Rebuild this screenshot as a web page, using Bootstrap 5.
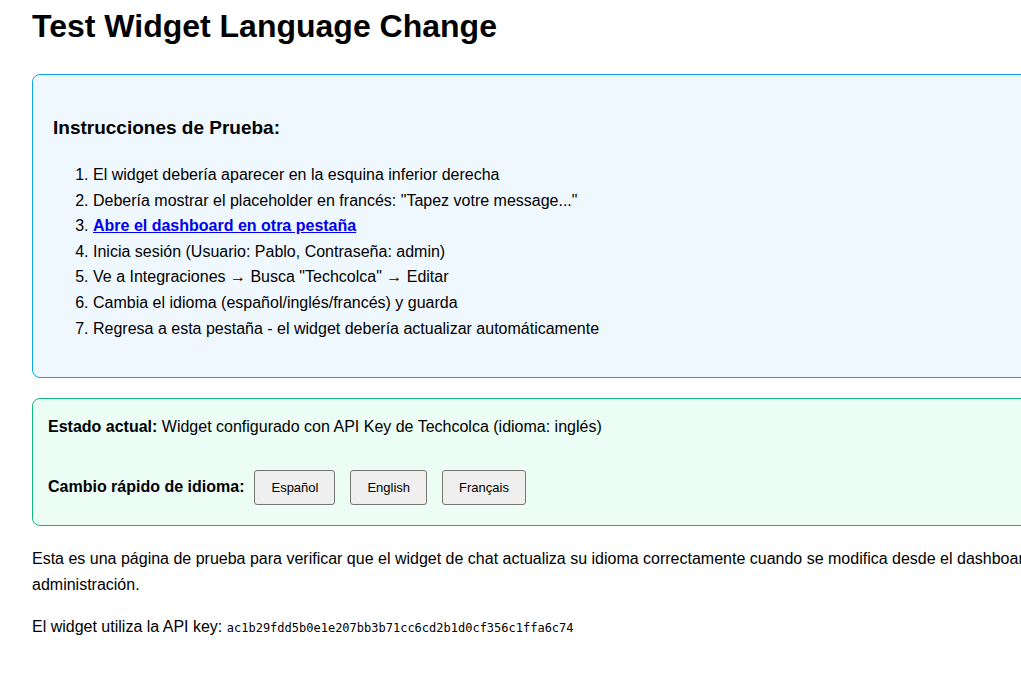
<!DOCTYPE html>
<html lang="es">
<head>
<meta charset="utf-8">
<meta name="viewport" content="width=device-width, initial-scale=1">
<title>Test Widget Language Change</title>
<link href="https://cdn.jsdelivr.net/npm/bootstrap@5.3.0/dist/css/bootstrap.min.css" rel="stylesheet">
<style>
  body { font-family: "Liberation Sans", Arial, sans-serif; font-size: 16px; line-height: 1.6; color: #000; background: #fff; overflow-x: hidden; }
  .page { min-width: 1100px; padding: 0 32px; }
  .page-title { font-size: 32px; font-weight: 700; line-height: 52px; margin: 0 0 22px; }
  .panel { border: 1px solid; border-radius: 8px; margin-bottom: 20px; }
  .panel-info { background: #f0f8ff; border-color: #0ea5e9; padding: 20px; }
  .panel-state { background: #ecfdf5; border-color: #10b981; padding: 15px; }
  .panel-title { font-size: 19px; font-weight: 700; line-height: 30px; margin: 18px 0 19px; }
  .steps { padding-left: 40px; margin-bottom: 16px; }
  .steps a { color: #00e; }
  .lang-row { gap: 10px; margin: 30px 0 5px; }
  .lang-list { gap: 15px; }
  .btn-lang { --bs-btn-font-size: 13px; --bs-btn-line-height: 17px; --bs-btn-padding-x: 16px; --bs-btn-padding-y: 8px; --bs-btn-border-radius: 3px; --bs-btn-color: #000; --bs-btn-bg: #efefef; --bs-btn-border-color: #767676; --bs-btn-hover-bg: #e5e5e5; --bs-btn-hover-border-color: #4f4f4f; }
  .notes { line-height: 26px; }
  .api-key { font-family: "DejaVu Sans Mono", Consolas, monospace; font-size: 12px; color: #000; }
</style>
</head>
<body>
<main class="page">
  <h1 class="page-title">Test Widget Language Change</h1>
  <section class="panel panel-info">
    <h2 class="panel-title">Instrucciones de Prueba:</h2>
    <ol class="steps">
      <li>El widget debería aparecer en la esquina inferior derecha</li>
      <li>Debería mostrar el placeholder en francés: "Tapez votre message..."</li>
      <li><a class="fw-bold" href="#dashboard">Abre el dashboard en otra pestaña</a></li>
      <li>Inicia sesión (Usuario: Pablo, Contraseña: admin)</li>
      <li>Ve a Integraciones → Busca "Techcolca" → Editar</li>
      <li>Cambia el idioma (español/inglés/francés) y guarda</li>
      <li>Regresa a esta pestaña - el widget debería actualizar automáticamente</li>
    </ol>
  </section>
  <section class="panel panel-state">
    <div><strong>Estado actual:</strong> Widget configurado con API Key de Techcolca (idioma: inglés)</div>
    <div class="lang-row d-flex align-items-center" role="group" aria-labelledby="lang-label">
      <strong id="lang-label">Cambio rápido de idioma:</strong>
      <div class="lang-list d-flex">
        <button type="button" class="btn btn-lang">Español</button>
        <button type="button" class="btn btn-lang">English</button>
        <button type="button" class="btn btn-lang">Français</button>
      </div>
    </div>
  </section>
  <div class="notes">
    <p>Esta es una página de prueba para verificar que el widget de chat actualiza su idioma correctamente cuando se modifica desde el dashboard de administración.</p>
    <p>El widget utiliza la API key: <code class="api-key">ac1b29fdd5b0e1e207bb3b71cc6cd2b1d0cf356c1ffa6c74</code></p>
  </div>
</main>
<script src="https://cdn.jsdelivr.net/npm/bootstrap@5.3.0/dist/js/bootstrap.bundle.min.js"></script>
</body>
</html>
